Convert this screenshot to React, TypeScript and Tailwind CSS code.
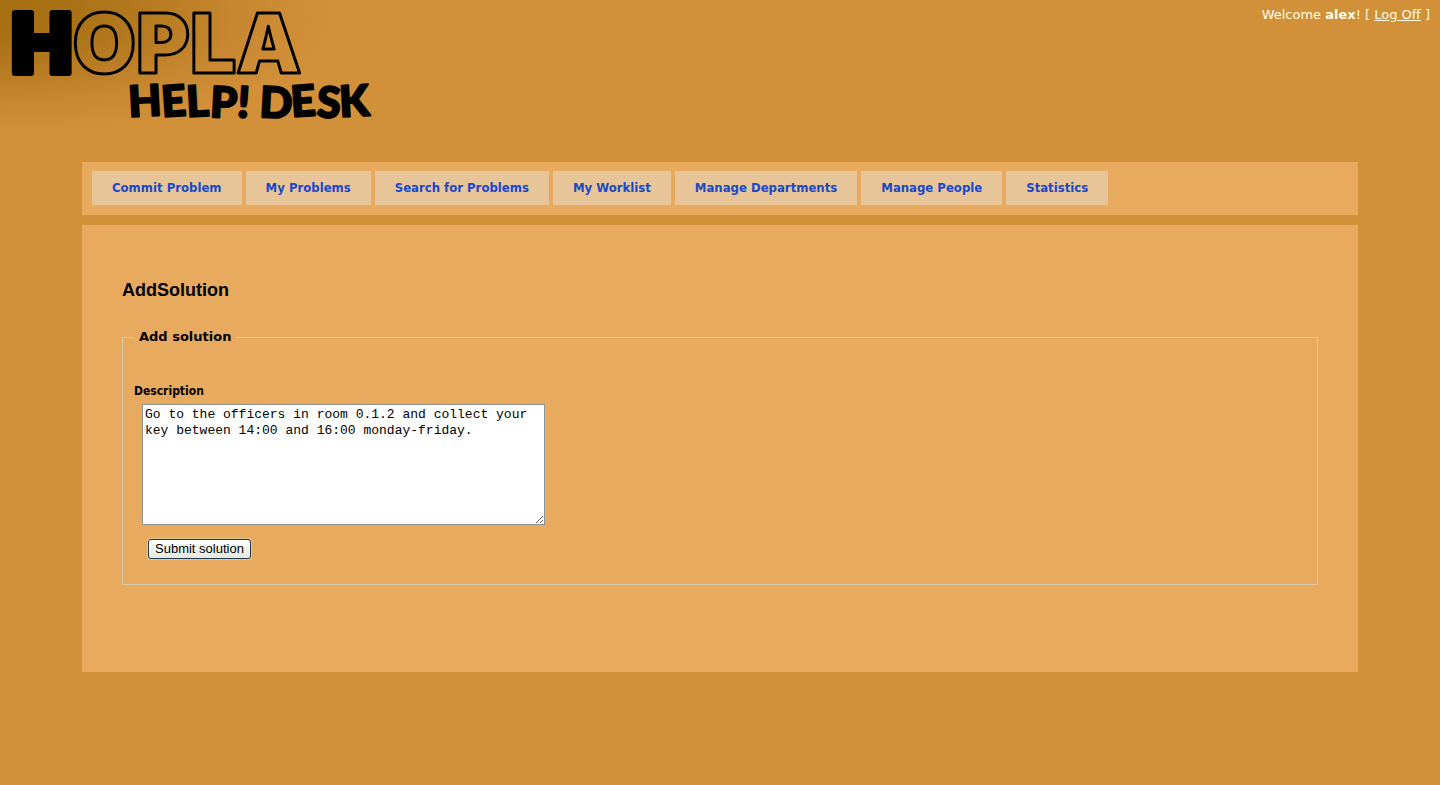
import React from "react";

const links = [
  "Commit Problem",
  "My Problems",
  "Search for Problems",
  "My Worklist",
  "Manage Departments",
  "Manage People",
  "Statistics",
];

function Logo() {
  return (
    <svg viewBox="0 0 380 130" role="img" aria-label="Hopla Help! Desk" className="h-[130px] w-[380px] shrink-0 overflow-visible">
      <g stroke="#000" strokeLinejoin="round" fontWeight="900">
        <text x="11" y="73" fontSize="82" fontFamily="Inter, sans-serif" strokeWidth="3" fill="none">
          <tspan fill="#000" strokeWidth="6">H</tspan>OPLA
        </text>
        <text x="129" y="117" fontSize="43" fontFamily="Lato, sans-serif" strokeWidth="2" fill="#000" rotate="-3 -4 -3 3 4 0 3 -4 3 -3">
          HELP! DESK
        </text>
      </g>
    </svg>
  );
}

export default function App() {
  return (
    <div className="min-h-screen bg-[#d29038] bg-[radial-gradient(ellipse_330px_120px_at_0_15px,#a66f11_0%,#a97215_22%,#b97c23_50%,#c88831_75%,#d29038_100%)] pb-10 font-['DejaVu_Sans',sans-serif] text-black">
      <header className="flex h-[162px] items-start justify-between">
        <Logo />
        <p className="px-[10px] pt-[5px] text-[13px] leading-5 text-[#fffde8]">
          Welcome <b>alex</b>! [{" "}
          <a href="#logoff" className="underline">
            Log Off
          </a>{" "}
          ]
        </p>
      </header>

      <nav className="mx-[82px] bg-[#e8aa5f] px-[10px] pt-[9px] pb-[10px]">
        <ul className="flex flex-wrap gap-1">
          {links.map((label) => (
            <li key={label}>
              <a
                href="#"
                className="block bg-[#e8c598] px-5 font-['DejaVu_Sans_Condensed','DejaVu_Sans',sans-serif] text-[13px] leading-[34px] font-bold text-[#1a48c8]"
              >
                {label}
              </a>
            </li>
          ))}
        </ul>
      </nav>

      <main className="mx-[82px] mt-[10px] bg-[#e8aa5f] px-10 pt-[51px] pb-[87px]">
        <h1 className="mb-[23px] font-['Liberation_Sans',Arial,sans-serif] text-[18px] leading-7 font-bold">AddSolution</h1>
        <form onSubmit={(e) => e.preventDefault()}>
          <fieldset className="border border-[#d8c8b0] px-[11px] pb-[25px]">
            <legend className="px-[5px] text-[13px] leading-5 font-bold">Add solution</legend>
            <label
              htmlFor="description"
              className="mt-[34px] block font-['DejaVu_Sans_Condensed','DejaVu_Sans',sans-serif] text-[12px] leading-5 font-bold"
            >
              Description
            </label>
            <textarea
              id="description"
              className="mt-[3px] ml-2 block h-[121px] w-[403px] max-w-full border border-[#8c9496] bg-white p-[2px] font-['Liberation_Mono',monospace] text-[13px] leading-4"
              defaultValue="Go to the officers in room 0.1.2 and collect your key between 14:00 and 16:00 monday-friday."
            />
            <button
              type="submit"
              className="mt-[14px] ml-[14px] block rounded-[3px] border border-[#1c3c58] bg-linear-to-b from-white to-[#e9e8df] px-[6px] font-['Liberation_Sans',Arial,sans-serif] text-[13px] leading-[18px] shadow-[0_0_0_1px_#e6c493]"
            >
              Submit solution
            </button>
          </fieldset>
        </form>
      </main>
    </div>
  );
}
